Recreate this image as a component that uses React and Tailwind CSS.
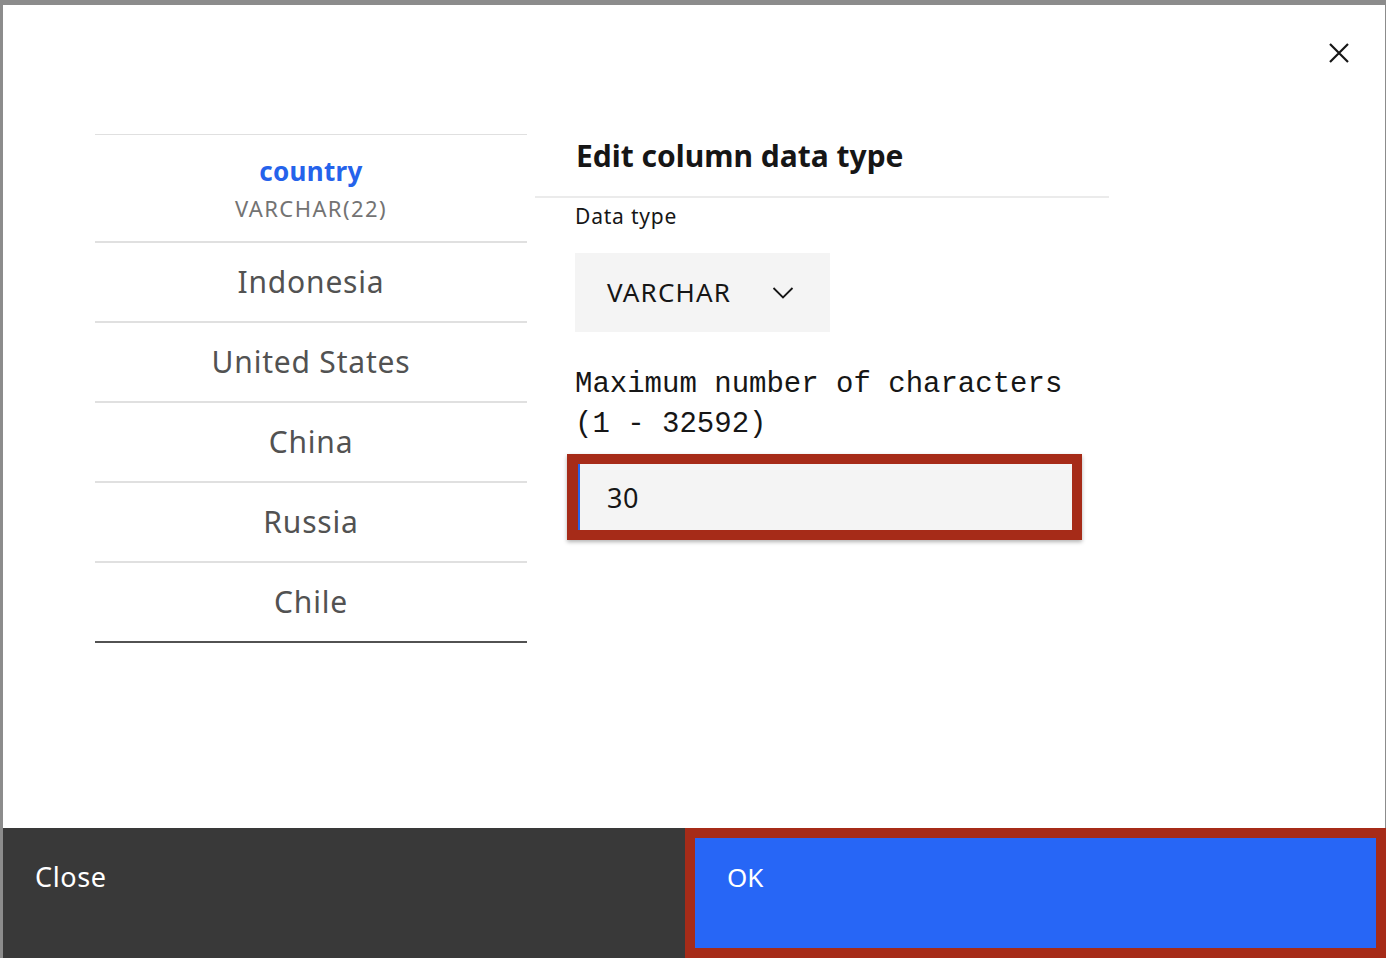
import { useState } from 'react'

const ROWS = ['Indonesia', 'United States', 'China', 'Russia', 'Chile']

const sans = { fontFamily: '"Noto Sans", "Open Sans", sans-serif' }

function CloseIcon() {
  return (
    <svg width="22" height="22" viewBox="0 0 22 22" fill="none" stroke="#161616" strokeWidth="2.2">
      <path d="M2 2 L20 20 M20 2 L2 20" />
    </svg>
  )
}

function Chevron() {
  return (
    <svg width="22" height="14" viewBox="0 0 22 14" fill="none" stroke="#161616" strokeWidth="1.8">
      <path d="M1.5 2 L11 11.5 L20.5 2" />
    </svg>
  )
}

export default function App() {
  const [maxChars, setMaxChars] = useState('30')

  return (
    <div className="w-full h-[958px] bg-[#8c8c8c] pt-[5px] pl-[3px] pr-[1px] overflow-hidden" style={sans}>
      <div className="relative h-full bg-white flex flex-col">
        <button className="absolute top-[37px] right-[35px] p-0">
          <CloseIcon />
        </button>

        <div className="flex-1 flex pl-[92px] pt-[129px]">
          {/* column preview */}
          <div className="w-[432px] border-t border-[#e0e0e0]">
            <div className="h-[108px] flex flex-col items-center pt-[19px] border-b-2 border-[#e0e0e0]">
              <div className="text-[26px] leading-[34px] font-bold text-[#2563eb] tracking-[0.3px]">country</div>
              <div className="text-[22px] leading-[30px] text-[#737373] tracking-[1.4px] mt-[5px]">VARCHAR(22)</div>
            </div>
            {ROWS.map((r, i) => (
              <div
                key={r}
                className={
                  i === ROWS.length - 1
                    ? 'h-[80px] flex items-center justify-center pb-[2px] text-[30px] tracking-[0.8px] text-[#525252] border-b-2 border-[#525252]'
                    : 'h-[80px] flex items-center justify-center pb-[2px] text-[30px] tracking-[0.8px] text-[#525252] border-b-2 border-[#e0e0e0]'
                }
              >
                {r}
              </div>
            ))}
          </div>

          {/* editor */}
          <div className="ml-[8px] w-[574px]">
            <div className="h-[64px] pt-[4px] pl-[41px] border-b-2 border-[#ebebeb]">
              <h2 className="text-[30px] leading-[36px] font-bold text-[#161616]">Edit column data type</h2>
            </div>
            <div className="pl-[40px]">
              <div className="mt-[6px] text-[21px] leading-[24px] tracking-[0.8px] text-[#161616]">Data type</div>
              <button className="mt-[25px] w-[255px] h-[79px] bg-[#f4f4f4] flex items-center pl-[32px] pr-[36px] justify-between">
                <span className="text-[26px] text-[#161616] tracking-[1.2px]">VARCHAR</span>
                <Chevron />
              </button>
              <div
                className="mt-[33px] text-[29px] leading-[40px] text-[#161616] w-[500px]"
                style={{ fontFamily: '"Liberation Mono", "DejaVu Sans Mono", monospace' }}
              >
                Maximum number of characters (1 - 32592)
              </div>
              <div className="mt-[9px] -ml-[8px] w-[515px] h-[86px] border-[10px] border-l-[11px] border-[#a62b18] shadow-[0_2px_4px_rgba(0,0,0,0.3)]">
                <input
                  value={maxChars}
                  onChange={(e) => setMaxChars(e.target.value)}
                  className="w-full h-full bg-[#f4f4f4] border-l-2 border-[#2563eb] pl-[27px] text-[27px] tracking-[0.5px] text-[#161616] outline-none"
                  style={sans}
                />
              </div>
            </div>
          </div>
        </div>

        {/* footer */}
        <div className="h-[130px] flex">
          <button className="w-[682px] h-full bg-[#393939] text-white text-[27px] tracking-[0.6px] text-left pl-[32px] pb-[32px]">
            Close
          </button>
          <div className="flex-1 -mr-[1px] border-[10px] border-[#a62b18]">
            <button className="w-full h-full bg-[#2766f6] text-white text-[26px] text-left pl-[32px] pb-[32px]">
              OK
            </button>
          </div>
        </div>
      </div>
    </div>
  )
}
